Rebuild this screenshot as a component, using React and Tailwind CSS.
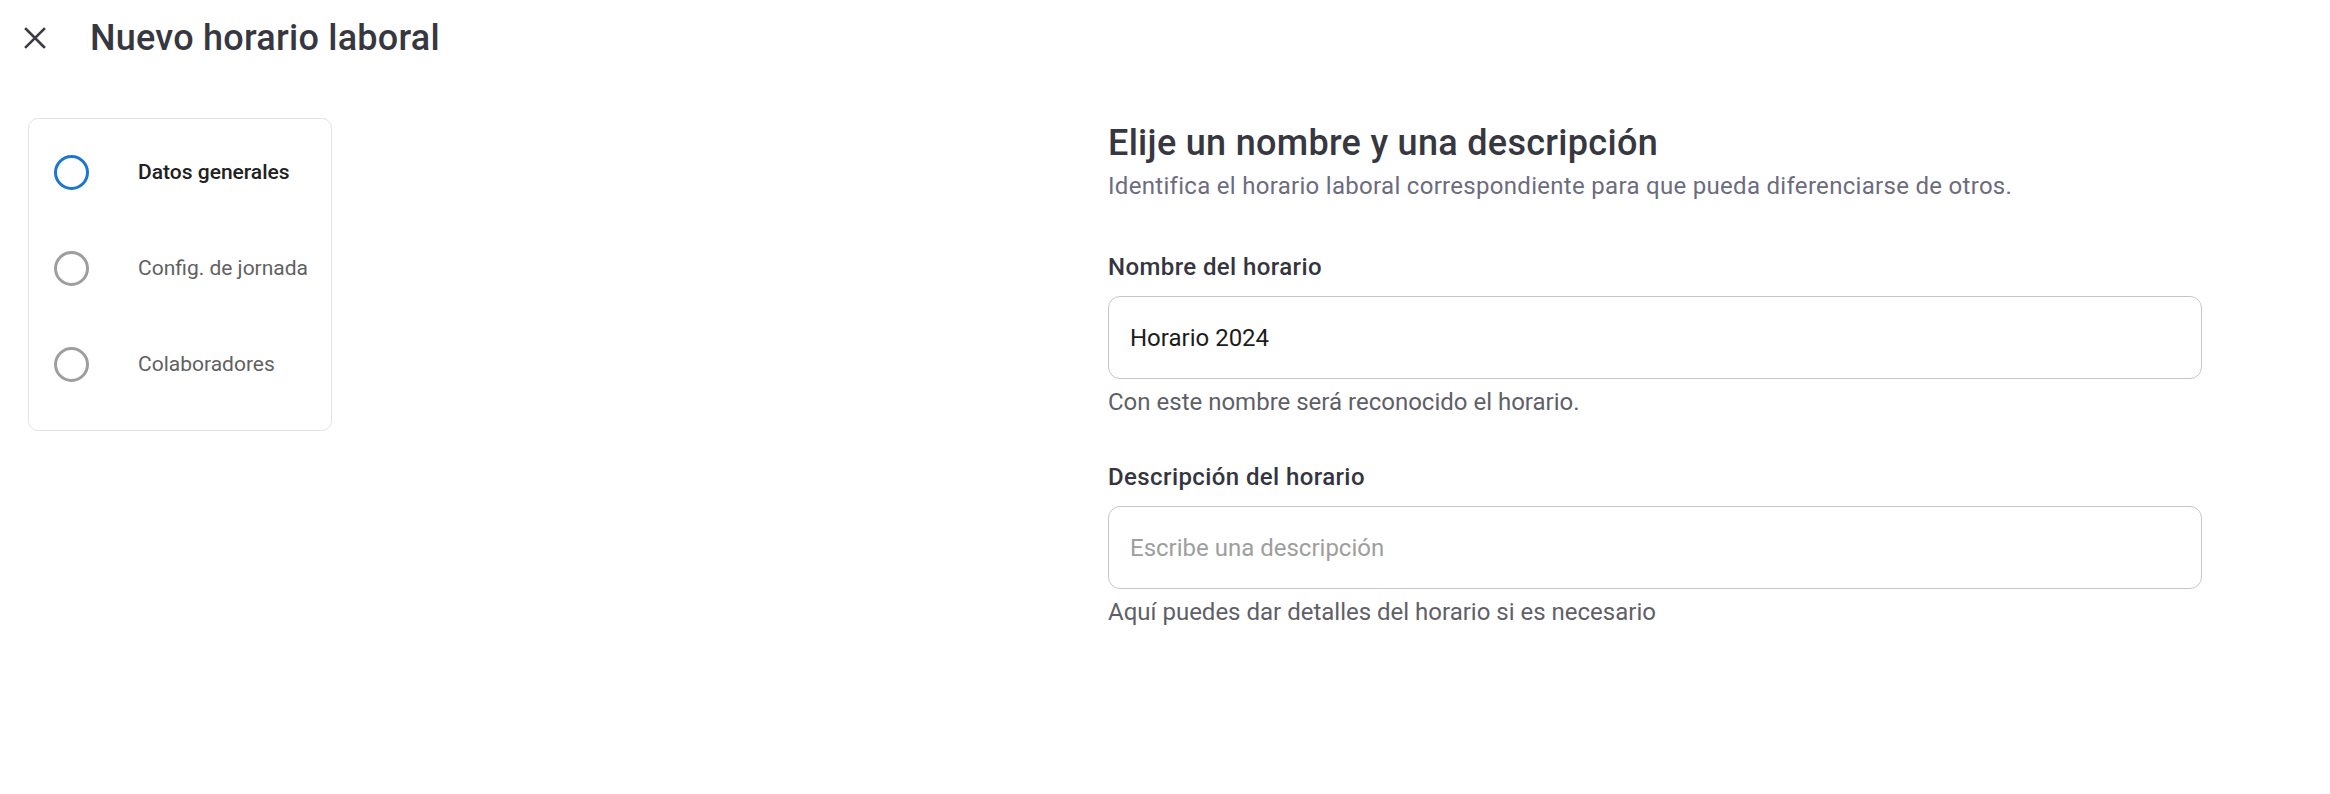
import { useState } from 'react';

const steps = [
  { label: 'Datos generales', active: true },
  { label: 'Config. de jornada', active: false },
  { label: 'Colaboradores', active: false },
];

function CloseIcon() {
  return (
    <svg width="22" height="22" viewBox="0 0 22 22" fill="none">
      <path d="M2 2L20 20M20 2L2 20" stroke="#3c3c45" strokeWidth="2.6" strokeLinecap="square" />
    </svg>
  );
}

function Field({ label, value, onChange, placeholder, helper }) {
  return (
    <div className="flex flex-col">
      <label className="text-[24px] leading-[30px] font-medium tracking-[0.4px] text-[#35353f]">{label}</label>
      <input
        type="text"
        value={value}
        onChange={onChange}
        placeholder={placeholder}
        className="mt-[14px] h-[83px] w-full rounded-[12px] border border-[#c6c6c6] px-[21px] text-[24px] text-[#1c1c1c] outline-none placeholder:text-[#9e9e9e]"
      />
      <p className="mt-[8px] text-[24px] leading-[30px] text-[#5f5f69]">{helper}</p>
    </div>
  );
}

export default function App() {
  const [name, setName] = useState('Horario 2024');
  const [description, setDescription] = useState('');

  return (
    <div className="min-h-screen bg-white font-['Roboto',sans-serif]">
      <header className="flex h-[76px] items-center pl-[24px]">
        <button className="flex items-center">
          <CloseIcon />
        </button>
        <h1 className="ml-[44px] text-[36px] leading-[44px] font-medium tracking-[0.25px] text-[#373741]">Nuevo horario laboral</h1>
      </header>

      <div className="flex pt-[42px]">
        <div className="ml-[28px] h-[313px] w-[304px] rounded-[10px] border border-[#e3e3e3] pt-[36px]">
          <div className="flex flex-col gap-[61px]">
            {steps.map((step) => (
              <div key={step.label} className="flex h-[35px] items-center pl-[25px]">
                <span
                  className={
                    step.active
                      ? 'h-[35px] w-[35px] shrink-0 rounded-full border-[3px] border-[#1976d2]'
                      : 'h-[35px] w-[35px] shrink-0 rounded-full border-[3px] border-[#9e9e9e]'
                  }
                />
                <span
                  className={
                    step.active
                      ? 'ml-[49px] text-[21px] font-medium text-[#212121]'
                      : 'ml-[49px] text-[21px] text-[#616161]'
                  }
                >
                  {step.label}
                </span>
              </div>
            ))}
          </div>
        </div>

        <div className="ml-auto mr-[128px] w-[1094px] pt-[4px]">
          <h2 className="text-[36px] leading-[42px] font-medium tracking-[0.3px] text-[#373741]">Elije un nombre y una descripción</h2>
          <p className="mt-[7px] text-[24px] leading-[30px] tracking-[0.3px] text-[#6c6c7e]">
            Identifica el horario laboral correspondiente para que pueda diferenciarse de otros.
          </p>

          <div className="mt-[51px]">
            <Field
              label="Nombre del horario"
              value={name}
              onChange={(e) => setName(e.target.value)}
              helper="Con este nombre será reconocido el horario."
            />
          </div>
          <div className="mt-[45px]">
            <Field
              label="Descripción del horario"
              value={description}
              onChange={(e) => setDescription(e.target.value)}
              placeholder="Escribe una descripción"
              helper="Aquí puedes dar detalles del horario si es necesario"
            />
          </div>
        </div>
      </div>
    </div>
  );
}
